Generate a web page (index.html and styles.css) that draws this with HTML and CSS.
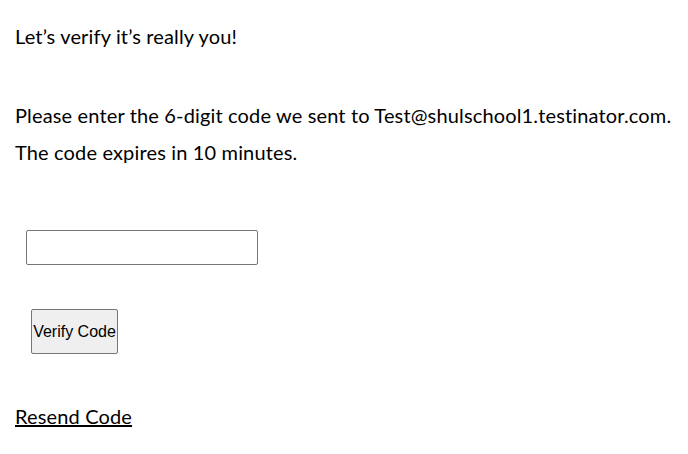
FILE: index.html
```html
<!DOCTYPE html>
<html>
<head>
<meta charset="utf-8">
<link rel="stylesheet" href="styles.css">
</head>
<body>
<div class="page">
  <p class="title">Let’s verify it’s really you!</p>
  <p class="msg">Please enter the 6-digit code we sent to Test@shulschool1.testinator.com.</p>
  <p class="msg msg-exp">The code expires in 10 minutes.</p>
  <div class="field"><input class="code" type="text"></div>
  <div class="actions"><button class="verify" type="button">Verify Code</button></div>
  <a class="resend" href="#">Resend Code</a>
</div>
</body>
</html>
```
FILE: styles.css
```css
html, body {
  margin: 0;
  padding: 0;
  background: #fff;
}
.page {
  padding: 0 15px;
  font-family: "Lato", "Noto Sans", sans-serif;
  font-size: 20px;
  letter-spacing: 0.15px;
  color: #000;
}
.title {
  margin: 0;
  padding-top: 24px;
  line-height: 24px;
}
.msg {
  margin: 55px 0 0;
  line-height: 24px;
}
.msg-exp {
  margin-top: 13px;
}
.field {
  margin-top: 66px;
  padding-left: 11px;
}
.code {
  display: block;
  box-sizing: border-box;
  width: 232px;
  height: 35px;
  margin: 0;
  border: 1px solid #767676;
  border-radius: 2px;
  padding: 1px 2px;
}
.actions {
  margin-top: 44px;
  padding-left: 16px;
}
.verify {
  display: block;
  box-sizing: border-box;
  width: 87px;
  height: 45px;
  margin: 0;
  padding: 0;
  font-family: "Liberation Sans", Arial, sans-serif;
  font-size: 16px;
  letter-spacing: 0;
  color: #000;
  background: #efefef;
  border: 1px solid #767676;
  border-radius: 2px;
}
.resend {
  display: inline-block;
  margin-top: 50px;
  color: #000;
  text-decoration: underline;
  line-height: 24px;
}
```
